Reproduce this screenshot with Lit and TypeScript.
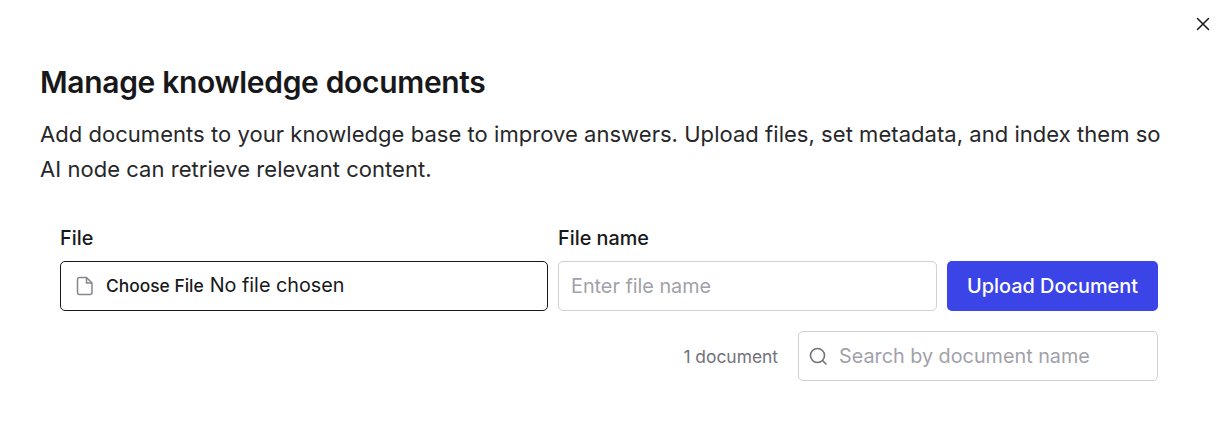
import { LitElement, css, html } from 'lit';
import { customElement } from 'lit/decorators.js';

@customElement('app-root')
export class AppRoot extends LitElement {
    static styles = css`
        :host {
            display: block;
            height: 423px;
            background: #fff;
            color: #18181b;
            font-family: Inter, 'Liberation Sans', sans-serif;
            overflow: hidden;
        }

        .dialog {
            position: relative;
            padding: 66px 40px 0;
        }

        .close {
            position: absolute;
            top: 17px;
            right: 16px;
            width: 14px;
            height: 14px;
            color: #18181b;
        }

        h2 {
            margin: 0;
            font-size: 30px;
            line-height: 33px;
            font-weight: 600;
            letter-spacing: -0.33px;
        }

        .desc {
            margin: 18px 0 0;
            max-width: 1125px;
            font-size: 22px;
            line-height: 35px;
            letter-spacing: 0.04px;
            color: #27272a;
        }

        .form {
            display: flex;
            flex-direction: column;
            gap: 20px;
            margin: 39px 28px 0 20px;
        }

        .row {
            display: grid;
            grid-template-columns: 488px 379px 211px;
            gap: 10px;
            align-items: end;
        }

        label {
            display: block;
            margin-bottom: 11px;
            font-size: 19.8px;
            line-height: 24px;
            font-weight: 500;
        }

        .file,
        .input {
            display: flex;
            align-items: center;
            box-sizing: border-box;
            height: 50px;
            border-radius: 5px;
            background: #fff;
        }

        .file {
            border: 1px solid #18181b;
            padding: 0 0 2px 15px;
            font-size: 19.8px;
        }

        .file svg {
            width: 18px;
            height: 20px;
            margin: 2px 12px 0 0;
            color: #85858c;
        }

        .pick {
            margin-right: 6px;
            font-size: 17.4px;
            font-weight: 500;
        }

        .input {
            border: 1px solid #d1d1d6;
            padding: 0 12px;
            font-size: 19.8px;
            color: #a1a1aa;
        }

        .upload {
            height: 50px;
            border: 0;
            border-radius: 5px;
            background: #3b44e6;
            color: #fff;
            font: 500 19.9px Inter, 'Liberation Sans', sans-serif;
        }

        .search-row {
            display: flex;
            justify-content: flex-end;
            align-items: center;
            gap: 20px;
        }

        .count {
            font-size: 17.4px;
            color: #71717a;
        }

        .search {
            width: 360px;
            gap: 11px;
        }

        .search svg {
            width: 20px;
            height: 20px;
            margin-left: -3px;
            color: #71717a;
        }
    `;

    render() {
        return html`
            <div class="dialog">
                <svg class="close" viewBox="0 0 14 14" fill="none" stroke="currentColor" stroke-width="1.5" stroke-linecap="round">
                    <path d="M1.5 1.5l11 11M12.5 1.5l-11 11" />
                </svg>
                <h2>Manage knowledge documents</h2>
                <p class="desc">
                    Add documents to your knowledge base to improve answers. Upload files, set metadata, and index them so
                    AI node can retrieve relevant content.
                </p>
                <div class="form">
                    <div class="row">
                        <div>
                            <label>File</label>
                            <div class="file">
                                <svg viewBox="0 0 18 20" fill="none" stroke="currentColor" stroke-width="1.5" stroke-linejoin="round">
                                    <path d="M3.5 1.5h7L16 7v9.5a2 2 0 0 1-2 2H3.500a2 2 0 0 1-2-2v-13a2 2 0 0 1 2-2z" />
                                    <path d="M10.500 1.500V7H16" />
                                </svg>
                                <span class="pick">Choose File</span>
                                <span>No file chosen</span>
                            </div>
                        </div>
                        <div>
                            <label>File name</label>
                            <div class="input">Enter file name</div>
                        </div>
                        <button class="upload">Upload Document</button>
                    </div>
                    <div class="search-row">
                        <span class="count">1 document</span>
                        <div class="input search">
                            <svg viewBox="0 0 20 20" fill="none" stroke="currentColor" stroke-width="1.600" stroke-linecap="round">
                                <circle cx="9.500" cy="9.500" r="7" />
                                <path d="M14.800 14.800L18 18" />
                            </svg>
                            <span>Search by document name</span>
                        </div>
                    </div>
                </div>
            </div>
        `;
    }
}
